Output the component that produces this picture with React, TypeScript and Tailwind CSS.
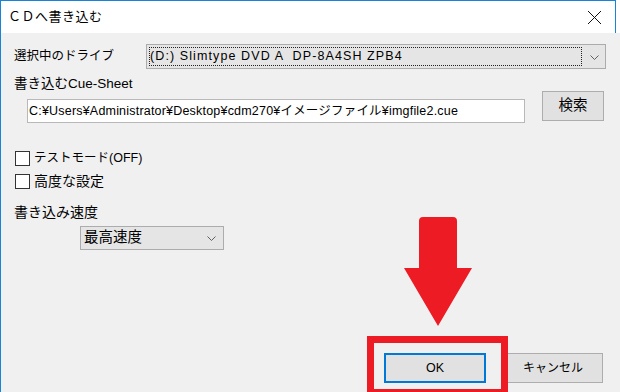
import React from 'react';

const jp = { fontFamily: '"Liberation Sans", "Noto Sans CJK JP", sans-serif' };

const Chevron = () => (
  <svg width="9" height="5" viewBox="0 0 9 5" fill="none">
    <path d="M0.5 0.5L4.5 4.5L8.5 0.5" stroke="#606060" strokeWidth="1" />
  </svg>
);

const Checkbox = ({ label, size }: { label: string; size: string }) => (
  <div className="flex items-center h-[16px] ml-[1px]">
    <div className="w-[15px] h-[15px] border border-[#333333] bg-white" />
    <span className={`ml-[4px] leading-[16px] ${size}`}>{label}</span>
  </div>
);

const WinButton = ({ children, primary, className }: { children: React.ReactNode; primary?: boolean; className?: string }) => (
  <div
    className={`flex items-center justify-center bg-[#e1e1e1] ${primary ? 'border-2 border-[#0078d7]' : 'border border-[#adadad]'} ${className ?? ''}`}
  >
    {children}
  </div>
);

export default function App() {
  return (
    <div className="relative w-[620px] h-[392px] overflow-hidden bg-[#f0f0f0] border-l border-[#1883d7] text-black" style={jp}>
      {/* Title bar */}
      <div className="flex h-[33px] bg-white">
        <div className="relative flex items-center w-[615px] h-[33px] border-t border-r border-[#1883d7] pl-[7px]">
          <span className="text-[13px] tracking-[0.5px]">ＣＤへ書き込む</span>
          <svg className="absolute left-[586px] top-[9px]" width="15" height="15" viewBox="0 0 15 15">
            <path d="M1 1L14 14M14 1L1 14" stroke="#111111" strokeWidth="1" />
          </svg>
        </div>
      </div>

      <div className="pl-[13px]">
        {/* Drive */}
        <div className="flex items-center mt-[11px]">
          <span className="w-[132px] text-[12.5px]">選択中のドライブ</span>
          <div className="relative flex items-center w-[460px] h-[25px] bg-[#e5e5e5] border border-[#acacac]">
            <div className="flex items-center ml-[2px] w-[433px] h-[19px] border border-dotted border-[#222222]">
              <span className="text-[12.5px] leading-none whitespace-pre tracking-[1.1px]">(D:) Slimtype DVD A  DP-8A4SH ZPB4</span>
            </div>
            <div className="ml-[8px] mt-[1px]">
              <Chevron />
            </div>
          </div>
        </div>

        {/* Cue sheet */}
        <div className="mt-[8px] h-[14px] text-[13.5px] leading-[14px]">書き込むCue-Sheet</div>
        <div className="flex items-start">
          <div className="flex items-center mt-[8px] ml-[13px] w-[498px] h-[24px] bg-white border border-[#b8b8b8] pl-[1px]">
            <span className="text-[12.5px] leading-none whitespace-nowrap tracking-[0.2px]">C:¥Users¥Administrator¥Desktop¥cdm270¥イメージファイル¥imgfile2.cue</span>
          </div>
          <WinButton className="ml-[17px] w-[62px] h-[30px] text-[14.5px]">検索</WinButton>
        </div>

        {/* Options */}
        <div className="mt-[27px]">
          <Checkbox label="テストモード(OFF)" size="text-[12.5px]" />
        </div>
        <div className="mt-[7px]">
          <Checkbox label="高度な設定" size="text-[14px]" />
        </div>

        <div className="mt-[15px] h-[16px] text-[14px] leading-[16px]">書き込み速度</div>
        <div className="flex items-center justify-between mt-[6px] ml-[66px] w-[144px] h-[24px] bg-[#e5e5e5] border border-[#acacac] pl-[3px] pr-[7px]">
          <span className="text-[14.5px]">最高速度</span>
          <Chevron />
        </div>

        {/* Buttons */}
        <div className="flex mt-[103px]">
          <WinButton primary className="ml-[370px] w-[102px] h-[30px] text-[12.5px]">OK</WinButton>
          <WinButton className="ml-[17px] w-[100px] h-[30px] text-[12px]">キャンセル</WinButton>
        </div>
      </div>

      {/* Annotation */}
      <div className="absolute left-[366px] top-[336px] w-[141px] h-[60px] border-[7px] border-[#ed1c24]" />
      <svg className="absolute left-[403px] top-[217px]" width="68" height="110" viewBox="0 0 68 110">
        <path d="M15 51V4Q15 0 19 0H49Q53 0 53 4V51H68L34 109L0 51Z" fill="#ed1c24" />
      </svg>
    </div>
  );
}
